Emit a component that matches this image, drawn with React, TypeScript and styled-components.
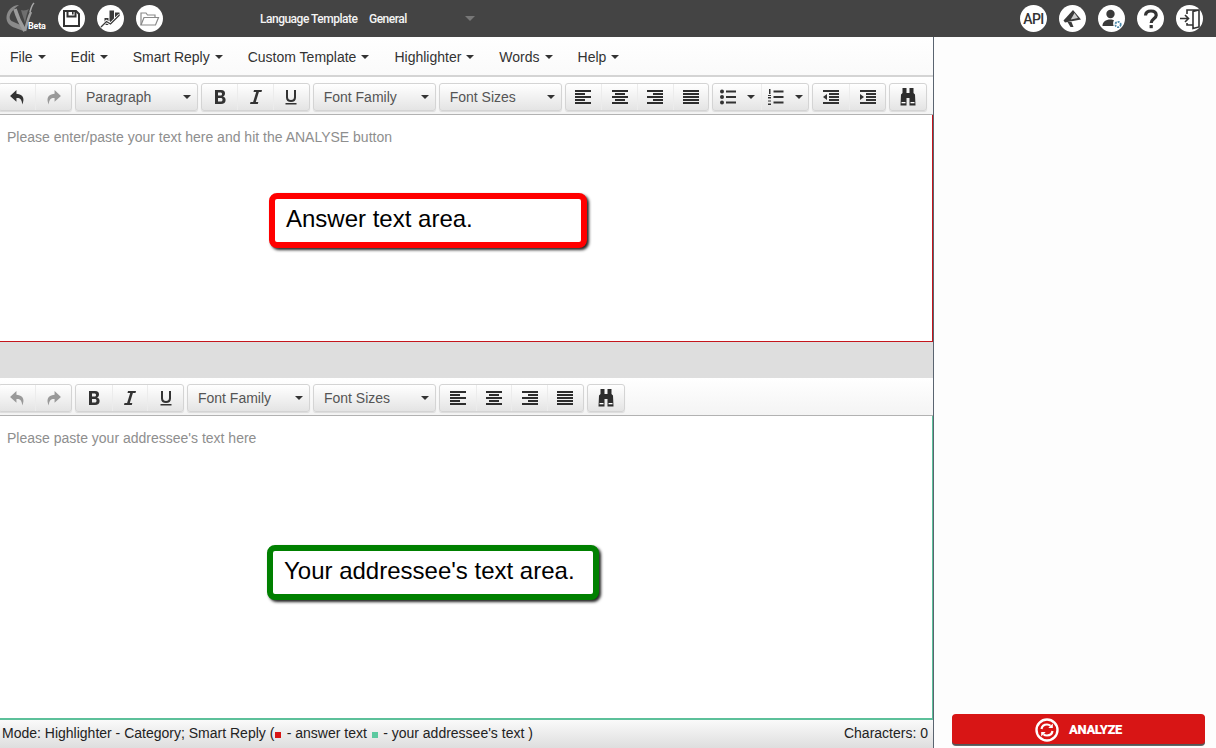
import React from 'react';
import styled, { createGlobalStyle } from 'styled-components';

const Global = createGlobalStyle`
  html, body { margin: 0; padding: 0; height: 100%; overflow: hidden; background: #fff; }
  body { font-family: "Liberation Sans", Arial, sans-serif; }
  * { box-sizing: border-box; }
`;

const Page = styled.div`
  width: 1216px; height: 748px; display: flex; flex-direction: column; overflow: hidden;
`;
const Header = styled.header`
  height: 37px; flex: none; background: #444; display: flex; align-items: center; position: relative;
`;
const Logo = styled.div`
  width: 58px; height: 37px; flex: none; display: flex; position: relative;
`;
const BetaLabel = styled.span`
  position: absolute; left: 28px; top: 21px; font: 700 9px Roboto, sans-serif; color: #fff; letter-spacing: -.2px;
`;
const LeftIcons = styled.div`
  display: flex; gap: 12px; margin-right: 97px;
`;
const RoundIcon = styled.div`
  width: 27px; height: 27px; border-radius: 50%; background: #fff; display: flex; align-items: center; justify-content: center; flex: none;
  color: #333; font: 500 14px Roboto, sans-serif; letter-spacing: -.5px;
`;
const TemplateLabel = styled.span<{ $w: number }>`
  font: 500 12px Roboto, sans-serif; letter-spacing: -.5px; color: #f4f4f4; width: ${p => p.$w}px; flex: none; white-space: nowrap;
`;
const HeaderCaret = styled.span`
  width: 0; height: 0; border-left: 5px solid transparent; border-right: 5px solid transparent; border-top: 5px solid #777;
`;
const RightIcons = styled.div`
  margin-left: auto; margin-right: 13px; display: flex; gap: 12px;
`;

const Body = styled.div`
  flex: 1; display: flex; min-height: 0;
`;
const EditorColumn = styled.main`
  width: 934px; flex: none; display: flex; flex-direction: column; border-right: 1px solid #5a6470; position: relative;
`;
const MenuBar = styled.nav`
  height: 40px; flex: none; border-bottom: 2px solid #d4d4d4; display: flex; align-items: center; padding-left: 10px; padding-top: 1px;
  background: linear-gradient(#fff, #fafafa);
`;
const MenuItem = styled.div<{ $gap: number }>`
  display: flex; align-items: center; font-size: 14px; color: #333; margin-right: ${p => p.$gap}px; white-space: nowrap;
`;
const Caret = styled.span`
  display: inline-block; width: 0; height: 0; border-left: 4px solid transparent; border-right: 4px solid transparent; border-top: 4px solid #333; margin-left: 5px;
`;
const Toolbar = styled.div`
  height: 38px; flex: none; display: flex; align-items: flex-start; gap: 3px; padding: 6px 0 0 0; margin-left: -2px;
  background: linear-gradient(#fff, #f4f4f4); border-bottom: 1px solid #b2b2b2;
`;
const Group = styled.div`
  display: flex; height: 28px; border: 1px solid #d4d4d4; border-radius: 3px; background: linear-gradient(#fff, #e4e4e4); box-shadow: 0 1px 1px rgba(0,0,0,.1);
`;
const ToolButton = styled.div<{ $w?: number }>`
  width: ${p => p.$w ?? 36}px; display: flex; align-items: center; justify-content: center; gap: 6px; color: #333;
  & + & { border-left: 1px solid #ececec; }
`;
const Select = styled.div<{ $w: number }>`
  width: ${p => p.$w}px; height: 28px; border: 1px solid #d4d4d4; border-radius: 3px; background: linear-gradient(#fff, #e4e4e4); box-shadow: 0 1px 1px rgba(0,0,0,.1);
  display: flex; align-items: center; justify-content: space-between; padding: 0 6px 0 10px; font-size: 14px; color: #555;
`;
const EditorArea = styled.section<{ $h: number; $color: string; $bottom: number }>`
  height: ${p => p.$h}px; flex: none; background: #fff; border-right: 1px solid ${p => p.$color}; border-bottom: ${p => p.$bottom}px solid ${p => p.$color}; padding: 14px 7px; font-size: 14px; color: #8e8e8e; position: relative;
`;
const Divider = styled.div`
  height: 36px; flex: none; background: #dedede;
`;
const Callout = styled.div<{ $color: string; $left: number; $top: number; $w: number }>`
  position: absolute; left: ${p => p.$left}px; top: ${p => p.$top}px; width: ${p => p.$w}px; height: 55px;
  border: 6px solid ${p => p.$color}; border-radius: 8px; background: #fff; box-shadow: 2px 2px 3px #222;
  font-size: 24px; color: #000; display: flex; align-items: center; padding-left: 11px; padding-bottom: 4px; white-space: nowrap;
`;
const StatusBar = styled.footer`
  flex: 1; background: linear-gradient(#fafafa, #dedede); display: flex; align-items: center; justify-content: space-between; padding: 0 5px 2px 2px; font-size: 14px; color: #222;
`;
const Swatch = styled.span<{ $c: string }>`
  display: inline-block; width: 6px; height: 6px; background: ${p => p.$c}; margin: 0 1.500px 0 1px;
`;
const SidePanel = styled.aside`
  flex: 1; background: #fdfdfd; display: flex; flex-direction: column; justify-content: flex-end; padding: 0 11px 3px 18px;
`;
const AnalyzeButton = styled.div`
  height: 31px; background: #d81515; border-radius: 4px; border-bottom: 1px solid #555; box-shadow: 0 1px 0 #666; display: flex; align-items: center; justify-content: center; gap: 10px;
  color: #fff; font: 900 13px Roboto, sans-serif; letter-spacing: -.4px; padding-top: 1px;
`;

const Undo = ({ c = '#333' }: { c?: string }) => (
  <svg width="17" height="17" viewBox="0 0 16 16"><path fill={c} d="M7 1 1 6.500 7 12V8.500c3-.3 5 .8 5.500 6 2.200-4.600 1.600-9.600-5.500-10Z" /></svg>
);
const Redo = ({ c = '#999' }: { c?: string }) => (
  <svg width="17" height="17" viewBox="0 0 16 16"><path fill={c} d="M9 1l6 5.500L9 12V8.500c-3-.3-5 .8-5.500 6C1.300 9.900 1.900 4.900 9 4.500Z" /></svg>
);
const Bold = () => (
  <svg width="16" height="16" viewBox="0 0 16 16"><path fill="#333" fillRule="evenodd" d="M3 1h6c3 0 4 1.500 4 3.500 0 1.500-.8 2.600-2 3 1.700.4 2.600 1.700 2.600 3.500 0 2.500-1.700 4-4.600 4H3Zm3 2.500v3h2.400c1 0 1.600-.5 1.600-1.500s-.6-1.500-1.600-1.500Zm0 5.500v3.500h2.700c1.200 0 1.800-.6 1.800-1.800S9.900 9 8.700 9Z" /></svg>
);
const Italic = () => (
  <svg width="16" height="16" viewBox="0 0 16 16"><path fill="#333" d="M6 1h8l-.5 2h-2.600L7.800 13h2.500l-.5 2H2l.5-2h2.600L8.200 3H5.500Z" /></svg>
);
const Underline = () => (
  <svg width="16" height="16" viewBox="0 0 16 16"><path fill="#333" d="M3 1h2v7c0 2 1 3 3 3s3-1 3-3V1h2v7.500c0 3-2 4.500-5 4.500s-5-1.500-5-4.500ZM2.500 14h11v1.500h-11Z" /></svg>
);
const Align = ({ kind }: { kind: 'left' | 'center' | 'right' | 'justify' }) => {
  const rows = kind === 'left'
    ? [[0, 16], [0, 10], [0, 16], [0, 10], [0, 16]]
    : kind === 'center'
      ? [[0, 16], [3, 10], [0, 16], [3, 10], [0, 16]]
      : kind === 'right'
        ? [[0, 16], [6, 10], [0, 16], [6, 10], [0, 16]]
        : [[0, 16], [0, 16], [0, 16], [0, 16], [0, 16]];
  return (
    <svg width="16" height="16" viewBox="0 0 16 16">
      {rows.map(([x, w], i) => <rect key={i} x={x} y={1 + i * 3} width={w} height="2" fill="#2d2d2d" />)}
    </svg>
  );
};
const BulletList = () => (
  <svg width="16" height="16" viewBox="0 0 16 16" fill="#333">
    <circle cx="2" cy="2.500" r="2" /><circle cx="2" cy="8" r="2" /><circle cx="2" cy="13.500" r="2" />
    <rect x="6" y="1.500" width="10" height="2" /><rect x="6" y="7" width="10" height="2" /><rect x="6" y="12.500" width="10" height="2" />
  </svg>
);
const NumberList = () => (
  <svg width="16" height="16" viewBox="0 0 16 16" fill="#333">
    <rect x="1" y="0" width="1.500" height="5" /><rect x="0" y="6" width="3" height="1" /><rect x="0" y="8" width="3" height="1.500" /><rect x="0" y="11.500" width="3" height="1" /><rect x="0" y="14.500" width="3" height="1.500" />
    <rect x="5.500" y="1.500" width="10" height="2" /><rect x="5.500" y="7" width="10" height="2" /><rect x="5.500" y="12.500" width="10" height="2" />
  </svg>
);
const Outdent = () => (
  <svg width="16" height="16" viewBox="0 0 16 16" fill="#333">
    <rect y="1" width="16" height="2" /><rect x="6" y="4" width="10" height="2" /><rect x="6" y="7" width="10" height="2" /><rect x="6" y="10" width="10" height="2" /><rect y="13" width="16" height="2" />
    <path d="M4 5v6L0 8Z" />
  </svg>
);
const Indent = () => (
  <svg width="16" height="16" viewBox="0 0 16 16" fill="#333">
    <rect y="1" width="16" height="2" /><rect x="6" y="4" width="10" height="2" /><rect x="6" y="7" width="10" height="2" /><rect x="6" y="10" width="10" height="2" /><rect y="13" width="16" height="2" />
    <path d="M0 5v6l4-3Z" />
  </svg>
);
const Binoculars = () => (
  <svg width="16" height="18" viewBox="0 0 16 18" fill="#2d2d2d">
    <path d="M2.500 0h4v5H9.500V0h4v5l1.500 1.500.5 11h-6V10h-3v7.500H.5l.5-11L2.500 5Z" />
    <rect x="1.500" y="14" width="4" height="1.300" fill="#fff" /><rect x="10.500" y="14" width="4" height="1.300" fill="#fff" />
  </svg>
);

const SaveIcon = () => (
  <svg width="19" height="19" viewBox="0 0 19 19" fill="none" stroke="#333" strokeWidth="2">
    <path d="M2 2h12l3 3v12H2Z" /><path d="M5.500 2v5.500h8V2" /><rect x="10" y="3" width="1.600" height="2.500" fill="#333" stroke="none" />
  </svg>
);
const ChartIcon = () => (
  <svg width="21" height="21" viewBox="0 0 21 21">
    <path d="M4.500 10H8.500V17H4.500ZM9.500 2.500H14V11.500L11 14.500 9.500 13ZM15 4.500H19.500V7L15 9.500Z" fill="#3a3a3a" />
    <path d="M1 19 6.500 13.500l4 2.500L19.500 7" fill="none" stroke="#fff" strokeWidth="3" />
    <path d="M1 19 6.500 13.500l4 2.500L19.500 7" fill="none" stroke="#3a3a3a" strokeWidth="1.300" />
  </svg>
);
const FolderIcon = () => (
  <svg width="21" height="19" viewBox="0 0 21 19" fill="none" stroke="#8a8a8a" strokeWidth="1.200">
    <path d="M2 16V4h5l1.500 2H16v2.500" /><path d="M2 16 5 8.500h14.500L16.500 16Z" />
  </svg>
);
const MegaphoneIcon = () => (
  <svg width="21" height="21" viewBox="0 0 21 21" fill="#3a3a3a">
    <path d="M11 2 19 11.500 3 14.500 1.500 12.500Z" /><path d="M5.500 14h4l2 5H8.500Z" />
    <path d="M12.500 5 16 10 8.800 11.400Z" fill="#ccc" />
  </svg>
);
const UserGearIcon = () => (
  <svg width="22" height="22" viewBox="0 0 22 22">
    <circle cx="9.500" cy="6" r="4.200" fill="#3a3a3a" />
    <path d="M1.500 18c0-4 3-6.500 8-6.500 1.500 0 2.500.3 3.500.7-1 1.400-1.200 3.800-.3 5.800Z" fill="#3a3a3a" />
    <circle cx="17" cy="16.500" r="2.700" fill="none" stroke="#4a88aa" strokeWidth="1.800" strokeDasharray="2 1" />
  </svg>
);
const HelpIcon = () => (
  <svg width="18" height="20" viewBox="0 0 18 20" fill="none" stroke="#333" strokeWidth="3.200">
    <path d="M3.500 6.500C3.700 3.500 6 2 9 2c3.200 0 5.200 1.700 5.200 4.200 0 3.600-5 3.600-5 7.800" />
    <rect x="7.600" y="16" width="3.200" height="3.200" fill="#333" stroke="none" />
  </svg>
);
const ExitIcon = () => (
  <svg width="22" height="22" viewBox="0 0 22 22" fill="none" stroke="#333" strokeWidth="1.600">
    <path d="M8 6V2h12v17l-6 1.500V3.500L19.500 2" /><path d="M14 17H8v-2" />
    <path d="M1 10.500h8M6 7l3.500 3.500L6 14" />
  </svg>
);
const RefreshIcon = () => (
  <svg width="24" height="24" viewBox="0 0 24 24" fill="none">
    <circle cx="12" cy="12" r="10.500" stroke="#fff" strokeWidth="2.400" />
    <path d="M6.500 11c.5-3 3-4.500 5.500-4.500 1.500 0 2.700.5 3.500 1.300" stroke="#fff" strokeWidth="2.200" />
    <path d="M17.800 5.500v4.500h-4.500Z" fill="#fff" />
    <path d="M17.500 13c-.5 3-3 4.500-5.500 4.500-1.500 0-2.700-.5-3.500-1.300" stroke="#fff" strokeWidth="2.200" />
    <path d="M6.200 18.500V14h4.500Z" fill="#fff" />
  </svg>
);
const LogoMark = () => (
  <svg width="40" height="37" viewBox="0 0 40 37" fill="none">
    <path d="M19 5C12 5 7 11 6.500 17c-.4 5 3 9 9 11l8 3-3-6-9-4c-2-1.500-2.500-4-1-7 1.500-3 4-6 8.500-9Z" fill="#8a8a8a" />
    <path d="M15 9c2 7 5 14 10 22" stroke="#9c9c9c" strokeWidth="3.500" />
    <path d="M25 31c2-8 3-13 6-19" stroke="#9c9c9c" strokeWidth="2.500" />
    <path d="M30 12c1-4 2-7 4-9" stroke="#a8a8a8" strokeWidth="1.500" />
    <path d="M21 10c3 1 6 0 8-1-2 3-3 9-4 14-1-4-3-9-4-13Z" fill="#6e6e6e" />
  </svg>
);

const menus: [string, number][] = [
  ['File', 25], ['Edit', 25], ['Smart Reply', 25], ['Custom Template', 25], ['Highlighter', 25], ['Words', 25], ['Help', 0],
];

const NARROW = 35.67;

const FormatTools = () => (
  <>
    <Group>
      <ToolButton $w={NARROW}><Bold /></ToolButton>
      <ToolButton $w={NARROW}><Italic /></ToolButton>
      <ToolButton $w={NARROW}><Underline /></ToolButton>
    </Group>
    <Select $w={123}>Font Family<Caret /></Select>
    <Select $w={123}>Font Sizes<Caret /></Select>
    <Group>
      <ToolButton $w={NARROW}><Align kind="left" /></ToolButton>
      <ToolButton $w={NARROW}><Align kind="center" /></ToolButton>
      <ToolButton $w={NARROW}><Align kind="right" /></ToolButton>
      <ToolButton $w={NARROW}><Align kind="justify" /></ToolButton>
    </Group>
  </>
);

export default function App() {
  return (
    <Page>
      <Global />
      <Header>
        <Logo><LogoMark /><BetaLabel>Beta</BetaLabel></Logo>
        <LeftIcons>
          <RoundIcon><SaveIcon /></RoundIcon>
          <RoundIcon><ChartIcon /></RoundIcon>
          <RoundIcon><FolderIcon /></RoundIcon>
        </LeftIcons>
        <TemplateLabel $w={109}>Language Template</TemplateLabel>
        <TemplateLabel $w={96}>General</TemplateLabel>
        <HeaderCaret />
        <RightIcons>
          <RoundIcon>API</RoundIcon>
          <RoundIcon><MegaphoneIcon /></RoundIcon>
          <RoundIcon><UserGearIcon /></RoundIcon>
          <RoundIcon><HelpIcon /></RoundIcon>
          <RoundIcon><ExitIcon /></RoundIcon>
        </RightIcons>
      </Header>
      <Body>
        <EditorColumn>
          <MenuBar>
            {menus.map(([m, g]) => (
              <MenuItem key={m} $gap={g}>{m}<Caret /></MenuItem>
            ))}
          </MenuBar>
          <Toolbar>
            <Group>
              <ToolButton><Undo /></ToolButton>
              <ToolButton><Redo /></ToolButton>
            </Group>
            <Select $w={122.7}>Paragraph<Caret /></Select>
            <FormatTools />
            <Group>
              <ToolButton $w={47.5}><BulletList /><Caret /></ToolButton>
              <ToolButton $w={47.5}><NumberList /><Caret /></ToolButton>
            </Group>
            <Group>
              <ToolButton><Outdent /></ToolButton>
              <ToolButton><Indent /></ToolButton>
            </Group>
            <Group>
              <ToolButton><Binoculars /></ToolButton>
            </Group>
          </Toolbar>
          <EditorArea $h={227} $color="#c4161c" $bottom={1}>
            Please enter/paste your text here and hit the ANALYSE button
            <Callout $color="#ff0000" $left={269} $top={78} $w={318}>Answer text area.</Callout>
          </EditorArea>
          <Divider />
          <Toolbar>
            <Group>
              <ToolButton><Undo c="#999" /></ToolButton>
              <ToolButton><Redo /></ToolButton>
            </Group>
            <FormatTools />
            <Group>
              <ToolButton><Binoculars /></ToolButton>
            </Group>
          </Toolbar>
          <EditorArea $h={304} $color="#5cc09a" $bottom={2}>
            Please paste your addressee's text here
            <Callout $color="#008000" $left={267} $top={129} $w={332}>Your addressee's text area.</Callout>
          </EditorArea>
          <StatusBar>
            <span>Mode: Highlighter - Category; Smart Reply (<Swatch $c="#d81515" /> - answer text <Swatch $c="#5cc9a0" /> - your addressee's text )</span>
            <span>Characters: 0</span>
          </StatusBar>
        </EditorColumn>
        <SidePanel>
          <AnalyzeButton><RefreshIcon />ANALYZE</AnalyzeButton>
        </SidePanel>
      </Body>
    </Page>
  );
}
